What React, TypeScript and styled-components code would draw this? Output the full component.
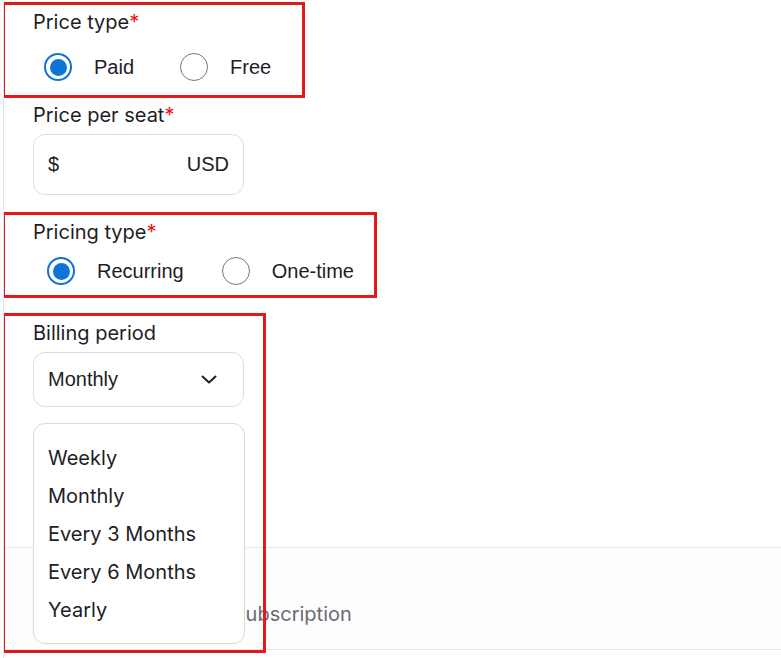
import { createGlobalStyle } from "styled-components";
import styled from "styled-components";

const billingOptions = ["Weekly", "Monthly", "Every 3 Months", "Every 6 Months", "Yearly"];

const App = () => {
  return (
    <>
      <GlobalStyle />
      <Panel>
        <Marked $w={303} $h={96} $top={2} $pb={17}>
          <Label>
            Price type<Req>*</Req>
          </Label>
          <RadioGroup $mt={19} $indent={11} $gap={46}>
            <RadioOption>
              <Radio type="radio" name="priceType" defaultChecked />
              Paid
            </RadioOption>
            <RadioOption>
              <Radio type="radio" name="priceType" />
              Free
            </RadioOption>
          </RadioGroup>
        </Marked>

        <Field>
          <Label>
            Price per seat<Req>*</Req>
          </Label>
          <PriceBox>
            <span>$</span>
            <PriceInput />
            <span>USD</span>
          </PriceBox>
        </Field>

        <Marked $w={375} $h={86} $top={17} $pb={13}>
          <Label>
            Pricing type<Req>*</Req>
          </Label>
          <RadioGroup $mt={13} $indent={14} $gap={38}>
            <RadioOption>
              <Radio type="radio" name="pricingType" defaultChecked />
              Recurring
            </RadioOption>
            <RadioOption>
              <Radio type="radio" name="pricingType" />
              One-time
            </RadioOption>
          </RadioGroup>
        </Marked>

        <Marked $w={264} $h={340} $top={15} $pb={0}>
          <Label>Billing period</Label>
          <Select>
            Monthly
            <svg width="16" height="9" viewBox="0 0 16 9" fill="none">
              <polyline
                points="1.5,1.5 8,7.5 14.5,1.5"
                stroke="#1f1f24"
                strokeWidth="2"
                strokeLinecap="round"
                strokeLinejoin="round"
              />
            </svg>
          </Select>
          <Menu>
            {billingOptions.map((opt) => (
              <MenuItem key={opt}>{opt}</MenuItem>
            ))}
          </Menu>
        </Marked>

        <Section>
          <SubRow>
            <SubIcon />
            <SubText>Monthly subscription</SubText>
          </SubRow>
        </Section>
      </Panel>
    </>
  );
};

export default App;

const GlobalStyle = createGlobalStyle`
  html, body {
    margin: 0;
    background: #ffffff;
  }
  body {
    font-family: Inter, "Liberation Sans", sans-serif;
    color: #1d1d27;
  }
`;

const Panel = styled.div`
  margin-left: 3px;
  border-left: 1px solid #e6e6ea;
  min-height: 658px;
  overflow: hidden;
`;

const Marked = styled.div<{ $w: number; $h: number; $top: number; $pb: number }>`
  position: relative;
  margin-top: ${(p) => p.$top}px;
  padding: 8px 0 ${(p) => p.$pb}px 29px;
  z-index: 2;

  &::after {
    content: "";
    position: absolute;
    left: -2px;
    top: 0;
    width: ${(p) => p.$w}px;
    height: ${(p) => p.$h}px;
    border: 3px solid #e3191c;
    box-sizing: border-box;
    pointer-events: none;
  }
`;

const Field = styled.div`
  margin-top: 5px;
  padding-left: 29px;
`;

const Label = styled.div`
  font-size: 20px;
  line-height: 24px;
  color: #1d1d27;
`;

const Req = styled.span`
  color: #e5161b;
`;

const RadioGroup = styled.div<{ $mt: number; $indent: number; $gap: number }>`
  display: flex;
  align-items: center;
  height: 28px;
  margin-top: ${(p) => p.$mt}px;
  padding-left: ${(p) => p.$indent}px;
  gap: ${(p) => p.$gap}px;
`;

const RadioOption = styled.label`
  display: flex;
  align-items: center;
  gap: 22px;
  font-family: "Liberation Sans", Arial, sans-serif;
  font-size: 20px;
  line-height: 24px;
`;

const Radio = styled.input`
  appearance: none;
  margin: 0;
  width: 28px;
  height: 28px;
  border-radius: 50%;
  border: 1.5px solid #767676;
  background: #fff;
  box-sizing: border-box;
  display: grid;
  place-items: center;

  &:checked {
    border: 2px solid #0f73d8;
  }
  &:checked::before {
    content: "";
    width: 17px;
    height: 17px;
    border-radius: 50%;
    background: #0f73d8;
  }
`;

const PriceBox = styled.div`
  margin-top: 7px;
  width: 211px;
  height: 61px;
  box-sizing: border-box;
  border: 1px solid #dcdce1;
  border-radius: 12px;
  display: flex;
  align-items: center;
  padding: 0 14px 0 14px;
  font-family: "Liberation Sans", Arial, sans-serif;
  font-size: 20px;
`;

const PriceInput = styled.input`
  flex: 1;
  width: 0;
  border: none;
  outline: none;
  background: transparent;
  font: inherit;
`;

const Select = styled.div`
  margin-top: 7px;
  width: 211px;
  height: 55px;
  box-sizing: border-box;
  border: 1px solid #dcdce1;
  border-radius: 12px;
  display: flex;
  align-items: center;
  justify-content: space-between;
  padding: 0 26px 0 14px;
  font-family: "Liberation Sans", Arial, sans-serif;
  font-size: 20px;
`;

const Menu = styled.ul`
  position: absolute;
  left: 29px;
  top: 110px;
  width: 212px;
  height: 221px;
  box-sizing: border-box;
  margin: 0;
  padding: 15px 0;
  list-style: none;
  background: #fff;
  border: 1px solid #d8d8de;
  border-radius: 12px;
`;

const MenuItem = styled.li`
  height: 38px;
  line-height: 38px;
  padding-left: 14px;
  font-size: 20px;
`;

const Section = styled.div`
  margin-top: 140px;
  border-top: 1px solid #e8e8ec;
  border-bottom: 1px solid #e8e8ec;
  background: #fdfdfd;
`;

const SubRow = styled.div`
  display: flex;
  align-items: center;
  gap: 103px;
  padding: 54px 0 23px 30px;
`;

const SubIcon = styled.span`
  width: 16px;
  height: 16px;
  border-radius: 50%;
  border: 2px solid #f0a030;
  box-sizing: border-box;
`;

const SubText = styled.span`
  font-size: 20px;
  line-height: 24px;
  color: #6b6b76;
`;
